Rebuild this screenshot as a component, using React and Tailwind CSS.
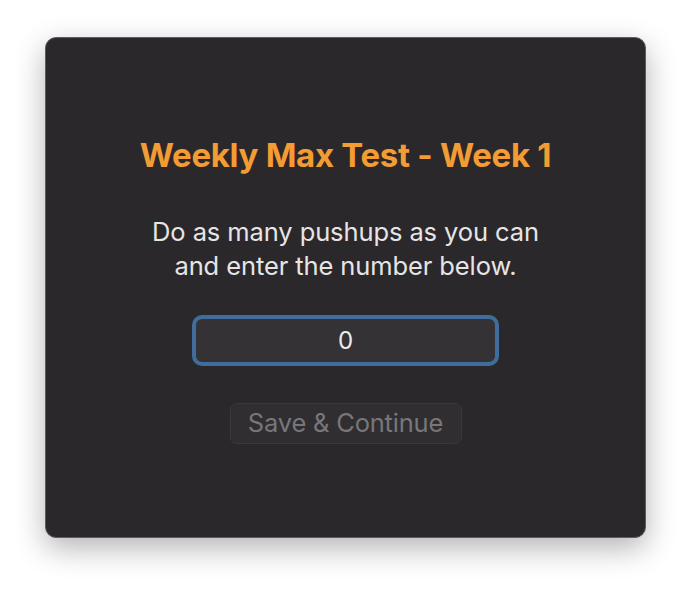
export default function App() {
  return (
    <div className="w-[692px] h-[592px] bg-white pt-[37px] pl-[45px] font-['Inter',sans-serif]">
      <div className="w-[601px] h-[501px] rounded-[11px] border border-[#5e5c5f] bg-[#2b282b] shadow-[0_10px_30px_rgba(0,0,0,0.3)] flex flex-col items-center pt-[99px]">
        <h1 className="text-[33px] leading-[36px] font-bold text-[#f39c33] tracking-[-0.3px]">
          Weekly Max Test - Week 1
        </h1>
        <p className="mt-[42px] text-center text-[25.5px] leading-[34px] text-[#e6e5e6] tracking-[-0.1px]">
          Do as many pushups as you can
          <br />
          and enter the number below.
        </p>
        <div className="mt-[32px] w-[307px] h-[51px] rounded-[10px] border-[4px] border-[#3f6d9e] bg-[#353236] flex items-center justify-center">
          <input
            type="text"
            defaultValue="0"
            className="w-full bg-transparent text-center text-[24px] text-[#ececec] outline-none"
          />
        </div>
        <button
          disabled
          className="mt-[37px] w-[232px] h-[41px] rounded-[7px] border border-[#3a383b] bg-[#302e31] text-[25.5px] text-[#78767a] tracking-[-0.2px]"
        >
          Save &amp; Continue
        </button>
      </div>
    </div>
  );
}
